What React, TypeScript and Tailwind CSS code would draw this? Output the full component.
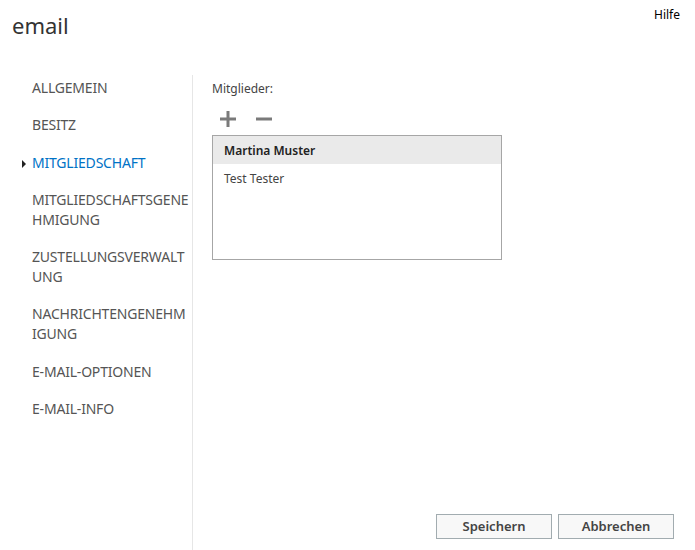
import React from 'react';

const navItems: { lines: string[]; active?: boolean }[] = [
  { lines: ['ALLGEMEIN'] },
  { lines: ['BESITZ'] },
  { lines: ['MITGLIEDSCHAFT'], active: true },
  { lines: ['MITGLIEDSCHAFTSGENE', 'HMIGUNG'] },
  { lines: ['ZUSTELLUNGSVERWALT', 'UNG'] },
  { lines: ['NACHRICHTENGENEHM', 'IGUNG'] },
  { lines: ['E-MAIL-OPTIONEN'] },
  { lines: ['E-MAIL-INFO'] },
];

const members = [
  { name: 'Martina Muster', selected: true },
  { name: 'Test Tester', selected: false },
];

export default function App() {
  return (
    <div
      className="h-[550px] w-[695px] bg-white text-[#333] flex flex-col overflow-hidden"
      style={{ fontFamily: '"Segoe UI", "Noto Sans", "Open Sans", sans-serif' }}
    >
      {/* header */}
      <div className="flex justify-between h-[75px] shrink-0">
        <h1 className="pl-[12px] pt-[10px] text-[22px] leading-[30px] font-normal text-[#333]">email</h1>
        <a className="pr-[15px] pt-[7px] text-[12px] leading-[16px] text-black">Hilfe</a>
      </div>

      <div className="flex flex-1 min-h-0">
        {/* left nav */}
        <nav className="w-[193px] shrink-0 border-r border-[#e6e6e6] pt-[3px]">
          <ul className="flex flex-col gap-[17.3px]">
            {navItems.map((item) => (
              <li key={item.lines[0]} className="relative pl-[32px]">
                {item.active && (
                  <span className="absolute left-[22px] top-[7px] w-0 h-0 border-y-[4px] border-y-transparent border-l-[4px] border-l-[#222]" />
                )}
                <span
                  className={`block text-[14px] leading-[20px] tracking-[-0.2px] ${
                    item.active ? 'text-[#0072c6]' : 'text-[#555]'
                  }`}
                >
                  {item.lines.map((l, i) => (
                    <React.Fragment key={l}>
                      {i > 0 && <br />}
                      {l}
                    </React.Fragment>
                  ))}
                </span>
              </li>
            ))}
          </ul>
        </nav>

        {/* content */}
        <div className="flex-1 flex flex-col pl-[19px] pr-[21px]">
          <div className="text-[12px] leading-[16px] text-[#444] pt-[6px]">Mitglieder:</div>
          <div className="flex items-center gap-[20px] pl-[8px] h-[28px] mt-[8px]">
            <svg width="16" height="16" viewBox="0 0 16 16">
              <rect x="0" y="6.5" width="16" height="3" fill="#7a7a7a" />
              <rect x="6.5" y="0" width="3" height="16" fill="#7a7a7a" />
            </svg>
            <svg width="16" height="16" viewBox="0 0 16 16">
              <rect x="0" y="6.5" width="16" height="3" fill="#7a7a7a" />
            </svg>
          </div>
          <div className="mt-[2px] w-[290px] h-[125px] border border-[#a6a6a6]">
            {members.map((m) => (
              <div
                key={m.name}
                className={`h-[28px] pt-[2px] flex items-center pl-[11px] text-[12px] ${
                  m.selected ? 'bg-[#eaeaea] font-semibold text-[#222]' : 'text-[#444]'
                }`}
              >
                {m.name}
              </div>
            ))}
          </div>

          <div className="mt-auto mb-[11px] flex justify-end gap-[6px]">
            <button className="w-[116px] h-[25px] bg-[#f8f8f8] border border-[#a2acb0] text-[13px] font-semibold text-[#444]">
              Speichern
            </button>
            <button className="w-[116px] h-[25px] bg-[#f8f8f8] border border-[#a2acb0] text-[13px] font-semibold text-[#444]">
              Abbrechen
            </button>
          </div>
        </div>
      </div>
    </div>
  );
}
